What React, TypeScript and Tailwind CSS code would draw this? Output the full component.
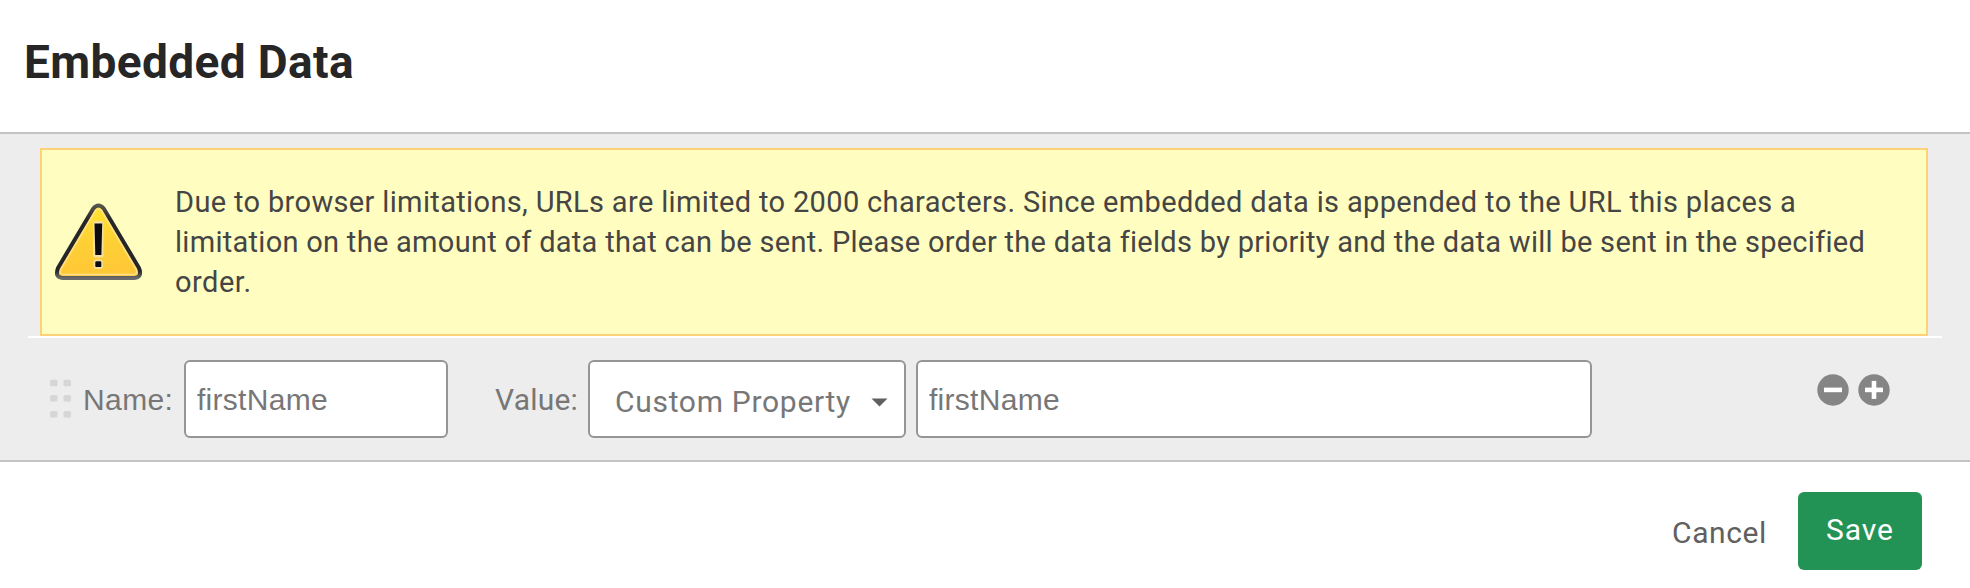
import { useState } from "react";

function WarningIcon() {
  return (
    <svg width="88" height="78" viewBox="0 0 88 78" className="shrink-0" aria-hidden="true">
      <defs>
        <linearGradient id="warn-fill" x1="0" y1="0" x2="0" y2="1">
          <stop offset="0" stopColor="#ffe52e" />
          <stop offset="0.5" stopColor="#fdd035" />
          <stop offset="1" stopColor="#ffc636" />
        </linearGradient>
        <linearGradient id="warn-edge" x1="0" y1="0" x2="0" y2="1">
          <stop offset="0" stopColor="#55554c" />
          <stop offset="0.2" stopColor="#25262a" />
          <stop offset="0.9" stopColor="#25262a" />
          <stop offset="1" stopColor="#6a6a6a" />
        </linearGradient>
      </defs>
      <path
        d="M39.3 5.5 Q44.5 -0.5 49.7 5.5 L85 65 Q88.5 74.5 80.5 75 H8.500 Q0.500 74.500 4 65 Z"
        fill="url(#warn-fill)"
        stroke="url(#warn-edge)"
        strokeWidth="4"
        strokeLinejoin="round"
      />
      <path
        d="M41.600 7.500 Q44.500 4.500 47.400 7.500 L82.300 66.500 Q83.500 71 80 71.500 H9 Q5.500 71 6.700 66.500 Z"
        fill="none"
        stroke="#ffe08a"
        strokeWidth="1.500"
      />
      <rect x="39" y="18" width="10.500" height="36.500" rx="2" fill="#f3dfa0" />
      <rect x="39.500" y="56.500" width="9.500" height="9.500" rx="3" fill="#f3dfa0" />
      <path d="M40.500 20.500 H48.200 L47.400 52 H41.300 Z" fill="#0c0c10" />
      <rect x="41.300" y="58.300" width="6" height="5.800" rx="1.200" fill="#0c0c10" />
    </svg>
  );
}

function DragHandle() {
  return (
    <svg width="22" height="40" viewBox="0 0 22 40" className="shrink-0" aria-hidden="true">
      {[0.8, 16, 32].map((y) => (
        <g key={y}>
          <rect x="0" y={y} width="7.500" height="6.500" rx="1.500" fill="#d6d6d6" />
          <rect x="13.500" y={y} width="7.500" height="6.500" rx="1.500" fill="#d6d6d6" />
        </g>
      ))}
    </svg>
  );
}

function RoundButton({ label, plus }: { label: string; plus?: boolean }) {
  return (
    <button type="button" aria-label={label} className="block size-8">
      <svg width="32" height="32" viewBox="0 0 32 32">
        <circle cx="16" cy="16" r="15.700" fill="#858585" />
        <rect x="7" y="13.600" width="18" height="4.600" fill="#fff" />
        {plus && <rect x="13.700" y="6.900" width="4.600" height="18" fill="#fff" />}
      </svg>
    </button>
  );
}

const field =
  "h-[78px] rounded-md border-2 border-[#959595] bg-white pt-[2px] pl-[11px] font-['Liberation_Sans',Arial,sans-serif] text-[30px] tracking-[0.28px] text-[#777] outline-none";

export default function App() {
  const [name, setName] = useState("firstName");
  const [value, setValue] = useState("firstName");

  return (
    <div className="flex h-[588px] w-[1970px] flex-col bg-white font-[Roboto,sans-serif]">
      <header className="flex h-[132px] items-center pl-6">
        <h1 className="mt-[-8px] text-[46px] leading-[52px] font-bold tracking-[0.38px] text-[#262626]">
          Embedded Data
        </h1>
      </header>

      <main className="h-[330px] border-y-2 border-[#c4c4c4] bg-[#ededed] px-7 pt-[14px]">
        <div className="border-b-2 border-white pr-[14px] pl-3">
          <div className="flex h-[188px] items-center border-2 border-[#fcd278] bg-[#fffec0] pl-3">
            <WarningIcon />
            <p className="ml-[33px] text-[29px] leading-[40px] whitespace-nowrap text-[#454545]">
              <span className="block tracking-[0.35px]">
                Due to browser limitations, URLs are limited to 2000 characters. Since embedded data is appended to the URL this places a
              </span>
              <span className="block tracking-[0.285px]">
                limitation on the amount of data that can be sent. Please order the data fields by priority and the data will be sent in the specified
              </span>
              <span className="block tracking-[0.5px]">order.</span>
            </p>
          </div>
        </div>

        <div className="flex h-[122px] items-center pl-[22px] text-[30px] text-[#777]">
          <DragHandle />
          <label htmlFor="name" className="w-[112px] pl-[11px] font-['Liberation_Sans',Arial,sans-serif] tracking-[0.4px]">
            Name:
          </label>
          <input id="name" value={name} onChange={(e) => setName(e.target.value)} className={`${field} w-[264px]`} />
          <label htmlFor="value" className="ml-[47px] w-[93px] tracking-[0.2px]">
            Value:
          </label>
          <button
            type="button"
            className="flex h-[78px] w-[318px] items-center justify-between rounded-md border-2 border-[#959595] bg-white pr-4 pl-[25px]"
          >
            <span className="pt-[5px] tracking-[0.7px]">Custom Property</span>
            <svg width="17" height="9" viewBox="0 0 17 9" className="mt-[6px]" aria-hidden="true">
              <path d="M0.500 0.500 H16.500 L8.500 8.500 Z" fill="#606060" />
            </svg>
          </button>
          <input
            id="value"
            value={value}
            onChange={(e) => setValue(e.target.value)}
            className={`${field} ml-[10px] w-[676px]`}
          />
          <div className="mb-[19px] ml-[225px] flex gap-[9px]">
            <RoundButton label="Remove field" />
            <RoundButton label="Add field" plus />
          </div>
        </div>
      </main>

      <footer className="flex h-[126px] items-start justify-end pt-[30px] pr-12 text-[30px]">
        <button type="button" className="mr-[31px] h-[78px] pt-[2px] tracking-[0.6px] text-[#606060]">
          Cancel
        </button>
        <button
          type="button"
          className="h-[78px] w-[124px] rounded-md bg-[#229354] pb-[3px] tracking-[0.9px] text-white"
        >
          Save
        </button>
      </footer>
    </div>
  );
}
